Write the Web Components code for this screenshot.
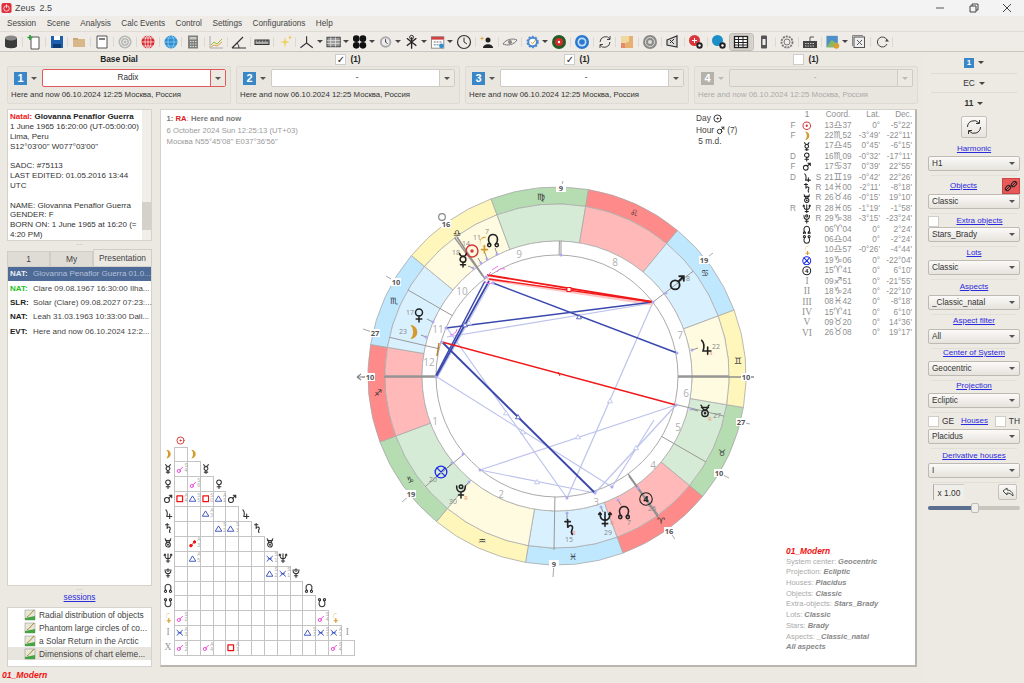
<!DOCTYPE html>
<html>
<head>
<meta charset="utf-8">
<title>Zeus 2.5</title>
<style>
  html, body { margin: 0; height: 683px; overflow: hidden; }
  body {
    display: flex; flex-direction: column;
    background: #ece9e3; color: #333;
    font: 8.400px/1.2 "Liberation Sans", "DejaVu Sans", sans-serif;
  }
  #work { display: flex; flex: 1; min-height: 0; }
  #mid { display: flex; flex-direction: column; width: 924px; }
  #content { display: flex; gap: 8px; padding: 5px 7px 0 7px; flex: 1; min-height: 0; }
</style>
</head>
<body>
<z-titlebar></z-titlebar>
<z-menubar></z-menubar>
<z-toolbar></z-toolbar>
<div id="work">
  <div id="mid">
    <z-dials></z-dials>
    <div id="content">
      <z-left></z-left>
      <z-chart></z-chart>
    </div>
    <z-status>01_Modern</z-status>
  </div>
  <z-side></z-side>
</div>

<script>
// planet glyphs, 24x24 box, stroke comes from the svg around them
const G = {
  sun: '<circle cx="12" cy="12" r="9.5"/><circle cx="12" cy="12" r="1.6" fill="currentColor"/>',
  moon: '<path fill="currentColor" stroke="none" d="M8 1.500A10.500 10.500 0 0 1 8 22.500A15 15 0 0 0 8 1.500Z"/>',
  merc: '<circle cx="12" cy="11" r="4.6"/><path d="M6.5 1.5 A5.6 5.6 0 0 0 17.500 1.500M12 15.600V23M8 19.500H16"/>',
  venus: '<circle cx="12" cy="8" r="5.600"/><path d="M12 13.600V23M7.500 18.500H16.500"/>',
  mars: '<circle cx="9.500" cy="14.500" r="6"/><path d="M14 10L21 3M15 3H21V9"/>',
  jup: '<path d="M7 2C11 6 11 12 9 18H21M16 12V23"/>',
  sat: '<path d="M6 4H14M10 1V13C12 8 19 9 17 15C16 18 14 20 17 23"/>',
  ura: '<circle cx="12" cy="16" r="5.500"/><circle cx="12" cy="16" r="1" fill="currentColor"/><path d="M5 2C8 3 6 10.500 12 10.500C18 10.500 16 3 19 2M6 6H18"/>',
  nep: '<path d="M4.500 3C4.500 11 7 14 12 14C17 14 19.500 11 19.500 3M12 2V23M8 19H16M2.500 5L4.500 2.500L6.500 5M17.500 5L19.500 2.500L21.500 5"/>',
  plu: '<path d="M5 4C5 12 8 13.500 12 13.500C16 13.500 19 12 19 4M12 13.500V23M8 18.500H16"/><circle cx="12" cy="5" r="2.800"/>',
  node: '<path d="M8 19C2 12 5 3 12 3C19 3 22 12 16 19"/><circle cx="6" cy="20" r="2.600"/><circle cx="18" cy="20" r="2.600"/>',
  snode: '<path d="M8 5C2 12 5 21 12 21C19 21 22 12 16 5"/><circle cx="6" cy="4" r="2.600"/><circle cx="18" cy="4" r="2.600"/>',
  lil: '<path fill="currentColor" stroke="none" d="M17 1A7 7 0 1 0 17 14L14 14A6 6 0 0 1 14 2Z"/><path d="M14 13V23M10 18.500H18"/>',
  fort: '<circle cx="12" cy="12" r="10"/><path d="M5 5L19 19M19 5L5 19"/>',
  chir: '<circle cx="12" cy="12" r="10"/><text x="12" y="17.500" text-anchor="middle" font-size="15" stroke="none" fill="currentColor" font-family="Open Sans, sans-serif" font-weight="700">4</text>',
  conj: '<circle cx="9" cy="16" r="5"/><path d="M13 12L21 4"/>',
  opp: '<circle cx="6" cy="18" r="4" fill="currentColor"/><circle cx="18" cy="6" r="4" fill="currentColor"/><path d="M8 16L16 8"/>',
  tri: '<path d="M12 4L22 20H2Z"/>',
  sq: '<path d="M3 3H21V21H3Z"/>',
  sex: '<path d="M3 4L21 20M21 4L3 20M7 12H17"/>'
};
const GCOL = { sun: '#d63b3b', moon: '#d49a2c', lil: '#d49a2c', fort: '#1a2ae8', merc: '#222', venus: '#222', mars: '#222', jup: '#222', sat: '#222', ura: '#222', nep: '#222', plu: '#222', node: '#222', snode: '#222', chir: '#222' };
const glyph = (name, size, col, sw) =>
  `<svg width="${size}" height="${size}" viewBox="0 0 24 24" fill="none" stroke-linecap="round" stroke-linejoin="round" stroke="${col || GCOL[name] || '#222'}" color="${col || GCOL[name] || '#222'}" stroke-width="${sw || 2.600}" style="display:block;margin:auto">${G[name]}</svg>`;

class ZTitlebar extends HTMLElement {
  constructor() { super(); this.attachShadow({ mode: 'open' }); }
  connectedCallback() {
    this.shadowRoot.innerHTML = `
      <style>
        :host { display: flex; align-items: center; height: 16px; background: #f3f3f3; padding-left: 1px; color: #444; font-size: 9px; }
        .name { margin-left: 3px; word-spacing: 2px; }
        .win { margin-left: auto; display: flex; }
        .win svg { width: 33px; height: 10px; }
      </style>
      <svg width="11" height="12" viewBox="0 0 12 12">
        <rect x="0.500" y="0.500" width="11" height="11" rx="2" fill="#e0303c"/>
        <circle cx="6" cy="6.500" r="3" fill="none" stroke="#fff" stroke-width="0.800"/>
        <path d="M6 2V6" stroke="#fff" stroke-width="0.800"/>
      </svg>
      <span class="name">Zeus 2.5</span>
      <span class="win">
        <svg viewBox="0 0 33 10"><path d="M12 5H20" stroke="#555"/></svg>
        <svg viewBox="0 0 33 10"><path d="M13 3H19V9H13ZM15 3V1H21V7H19" fill="none" stroke="#444"/></svg>
        <svg viewBox="0 0 33 10" style="margin-right:1px"><path d="M13 1L21 9M21 1L13 9" stroke="#444"/></svg>
      </span>`;
  }
}
customElements.define('z-titlebar', ZTitlebar);

class ZMenubar extends HTMLElement {
  constructor() { super(); this.attachShadow({ mode: 'open' }); }
  connectedCallback() {
    const items = ['Session', 'Scene', 'Analysis', 'Calc Events', 'Control', 'Settings', 'Configurations', 'Help'];
    this.shadowRoot.innerHTML = `
      <style>
        :host { display: flex; align-items: center; gap: 10.500px; height: 15px; padding: 1px 0 0 7px; box-sizing: border-box; background: #efece7; color: #444; font-size: 8.200px; }
      </style>
      ${items.map(i => `<span>${i}</span>`).join('')}`;
  }
}
customElements.define('z-menubar', ZMenubar);

const ICONS = {
  cyl: '<path d="M2 4V12C2 15 14 15 14 12V4Z" fill="#3a3a3a"/><ellipse cx="8" cy="4" rx="6" ry="2.500" fill="#888"/>',
  newdoc: '<path d="M5 3H13V15H5Z" fill="#fff" stroke="#555"/><path d="M4 1V6M1.500 3.500H6.500" stroke="#2a9a3a" stroke-width="1.600"/>',
  save: '<path d="M2 2H14V14H2Z" fill="#1c5fae"/><rect x="5" y="2" width="6" height="4" fill="#fff"/><rect x="4" y="10" width="8" height="4" fill="#0d3a70"/>',
  folder: '<path d="M2 5H14V13H2Z" fill="#d8b888"/><path d="M2 4H7V6H2Z" fill="#c8a878"/>',
  doc: '<path d="M3 2H13V14H3Z" fill="#fff" stroke="#555"/><path d="M5 5H11" stroke="#555" stroke-width="1.500"/>',
  tgray: '<circle cx="8" cy="8" r="6.500" fill="#b8b8b4"/><circle cx="8" cy="8" r="4.500" fill="none" stroke="#eee"/><circle cx="8" cy="8" r="2" fill="none" stroke="#eee"/>',
  glober: '<circle cx="8" cy="8" r="6.500" fill="#d8262c"/><path d="M1.500 8H14.500M8 1.500V14.500M3 4H13M3 12H13" stroke="#fff" stroke-width="0.700"/><ellipse cx="8" cy="8" rx="3" ry="6.500" fill="none" stroke="#fff" stroke-width="0.700"/>',
  globeb: '<circle cx="8" cy="8" r="6.500" fill="#2d8fd0"/><path d="M1.500 8H14.500M3 4H13M3 12H13" stroke="#9cd0f0" stroke-width="0.700"/><ellipse cx="8" cy="8" rx="3" ry="6.500" fill="none" stroke="#9cd0f0" stroke-width="0.700"/>',
  calc: '<rect x="3" y="1.500" width="10" height="13" fill="#7f7f7b"/><rect x="4.500" y="3" width="7" height="2.500" fill="#c8c8c4"/><path d="M5 7.500H6.500M7.500 7.500H9M10 7.500H11.500M5 10H6.500M7.500 10H9M10 10H11.500M5 12.500H6.500M7.500 12.500H9M10 12.500H11.500" stroke="#ddd"/>',
  chart: '<path d="M2 2V14H15" fill="none" stroke="#aaa"/><path d="M3 11L6 8L9 10L14 5" fill="none" stroke="#9bbf30"/><path d="M3 13L6 11L9 12L14 8" fill="none" stroke="#e0a040"/>',
  angle: '<path d="M1 14H15M1 14L12 3" fill="none" stroke="#333" stroke-width="1.200"/><path d="M8 14A7 7 0 0 0 6 9" fill="none" stroke="#333"/>',
  ruler: '<rect x="1" y="6" width="14" height="4.500" fill="#aaa" stroke="#333"/><path d="M4 6V8M7 6V8M10 6V8M13 6V8" stroke="#333"/>',
  spark: '<path d="M8 3L9 7L13 8L9 9L8 14L7 9L3 8L7 7Z" fill="#f0d060"/><path d="M13 1L13.500 3L15 3.500L13.500 4L13 6L12.500 4L11 3.500L12.500 3Z" fill="#f0c040"/>',
  axes: '<path d="M8 2V9L1.500 14M8 9L14.500 14" fill="none" stroke="#333" stroke-width="1.200"/>',
  film: '<rect x="1" y="3" width="14" height="10" fill="#999" stroke="#444"/><path d="M1 6.500H15M1 9.500H15M5 3V13M10 3V13" stroke="#eee" stroke-width="0.700"/>',
  clover: '<circle cx="4.500" cy="4.500" r="3.500" fill="#111"/><circle cx="11.500" cy="4.500" r="3.500" fill="#111"/><circle cx="4.500" cy="11.500" r="3.500" fill="#111"/><circle cx="11.500" cy="11.500" r="3.500" fill="#111"/>',
  cgear: '<circle cx="8" cy="8" r="6" fill="#aaa"/><circle cx="8" cy="8" r="4" fill="#eee"/><path d="M8 5V8L10 10" fill="none" stroke="#333"/>',
  star: '<path d="M8 3V15M3 4L13 12M13 4L3 12" stroke="#222" stroke-width="1.400"/><circle cx="8" cy="3" r="2" fill="none" stroke="#222"/>',
  cal: '<rect x="1.500" y="2.500" width="13" height="12" fill="#fff" stroke="#888"/><rect x="1.500" y="2.500" width="13" height="3" fill="#d04040"/><path d="M4 8H6M7 8H9M10 8H12M4 11H6M7 11H9" stroke="#666"/><circle cx="12" cy="12" r="2.500" fill="#2d8fd0"/>',
  clock: '<circle cx="8" cy="8" r="6.500" fill="none" stroke="#333" stroke-width="1.200"/><path d="M8 3.500V8L11 10" fill="none" stroke="#333"/>',
  people: '<circle cx="9" cy="6" r="2.500" fill="#222"/><path d="M4 14C4 9 14 9 14 14Z" fill="#222"/><path d="M3 2L3.600 4L5.500 4.500L3.600 5L3 7L2.400 5L0.500 4.500L2.400 4Z" fill="#e0a030"/>',
  eye: '<path d="M1 10C4 5 11 4 15 6C12 11 5 12 1 10Z" fill="none" stroke="#777"/><circle cx="8" cy="8" r="2" fill="#888"/>',
  gearb: '<circle cx="8" cy="8" r="5.500" fill="#4a8ad0" stroke="#4a8ad0" stroke-width="2" stroke-dasharray="2 1.500"/><circle cx="8" cy="8" r="3.500" fill="#fff"/><path d="M6 8L8 10L11 6" fill="none" stroke="#d4a020"/>',
  redg: '<circle cx="8" cy="8" r="7" fill="#245c28"/><circle cx="8" cy="8" r="4" fill="#d42a2a"/><circle cx="8" cy="8" r="1.200" fill="#fff"/>',
  blt: '<circle cx="8" cy="8" r="7" fill="#2a78d0"/><circle cx="8" cy="8" r="4.500" fill="#bfe0fa"/><circle cx="8" cy="8" r="2.800" fill="#2a78d0"/>',
  rot: '<path d="M3 8A5.500 5.500 0 0 1 13 5M13 8A5.500 5.500 0 0 1 3 11" fill="none" stroke="#444"/><path d="M13 2V5.500H10M3 14V10.500H6" fill="none" stroke="#444"/>',
  map: '<rect x="2" y="2" width="12" height="12" fill="#f0d8a0"/><path d="M2 14L8 8H10V2H14V14Z" fill="#e8b070"/><path d="M2 9H6V14H2Z" fill="#e88870"/>',
  tg2: '<circle cx="8" cy="8" r="7" fill="#8a8a86"/><circle cx="8" cy="8" r="4.500" fill="none" stroke="#ddd"/><circle cx="8" cy="8" r="2" fill="#ddd"/>',
  tag: '<path d="M2 6L12 2V13L2 11Z" fill="#ddd" stroke="#333" stroke-width="1.200"/><path d="M5 6L9 10M9 5L5 9" stroke="#333"/>',
  redgear: '<circle cx="6.500" cy="6.500" r="5.500" fill="#d8383c"/><path d="M4 6.500H9M6.500 4V9" stroke="#fff"/><circle cx="11.500" cy="11.500" r="3.200" fill="#222"/><circle cx="11.500" cy="11.500" r="1.200" fill="#fff"/>',
  bluegear: '<circle cx="6.500" cy="6.500" r="5.500" fill="#1c8fc8"/><circle cx="11.500" cy="11.500" r="3.200" fill="#222"/><circle cx="11.500" cy="11.500" r="1.200" fill="#fff"/>',
  table: '<rect x="1.500" y="2.500" width="13" height="11" fill="#fff" stroke="#222" stroke-width="1.300"/><path d="M1.500 5.500H14.500M1.500 8.500H14.500M1.500 11H14.500M5.500 2.500V13.500M10 2.500V13.500" stroke="#222"/>',
  phone: '<rect x="5" y="1.500" width="6" height="13" rx="1" fill="#555"/><rect x="6.500" y="5" width="3" height="6" fill="#eee"/>',
  gearo: '<circle cx="8" cy="8" r="5.500" fill="none" stroke="#777" stroke-width="1.800" stroke-dasharray="2 1"/><circle cx="8" cy="8" r="3" fill="none" stroke="#777"/>',
  kbd: '<rect x="1" y="7" width="14" height="7" fill="#444"/><path d="M3 9.500H13M3 12H13" stroke="#ccc" stroke-dasharray="1.500 1"/><path d="M8 7V3L12 3" fill="none" stroke="#555"/>',
  mapg: '<rect x="1.500" y="1.500" width="12" height="12" fill="#4f90c8"/><path d="M1.500 13.500L7 6L13.500 10V13.500Z" fill="#8ab860"/><circle cx="12" cy="12" r="3" fill="#d8a030"/>',
  boxx: '<rect x="3" y="3" width="10.500" height="10.500" fill="#eee" stroke="#555"/><path d="M1.500 12V1.500H12" fill="none" stroke="#888"/><path d="M6 6L11 11M11 6L6 11" stroke="#555"/>',
  redo: '<path d="M13 6A5 5 0 1 0 13 10" fill="none" stroke="#444"/><path d="M11 7.500H15L13 5Z" fill="#444"/>'
};

class ZToolbar extends HTMLElement {
  constructor() { super(); this.attachShadow({ mode: 'open' }); }
  connectedCallback() {
    const tools = ['cyl', 'newdoc', 'save', 'folder', 'doc', 'tgray', 'glober', 'globeb', 'calc', 'chart', 'angle', 'ruler', 'spark',
      'axes+', 'film+', 'clover+', 'cgear+', 'star+', 'cal+', 'clock', 'people', 'eye', 'gearb+', 'redg', 'blt', 'rot', 'map', 'tg2',
      'tag', 'redgear', 'bluegear', 'table*', 'phone', 'gearo', 'kbd', 'mapg+', 'boxx', 'redo'];
    const html = tools.map(t => {
      const name = t.replace(/[+*]/, '');
      const arrow = t.endsWith('+');
      return `<span class="t ${arrow ? 'arr' : ''} ${t.endsWith('*') ? 'on' : ''}">
        <svg width="16" height="16" viewBox="0 0 16 16">${ICONS[name]}</svg>${arrow ? '<i></i>' : ''}</span>`;
    }).join('');
    this.shadowRoot.innerHTML = `
      <style>
        :host { display: flex; align-items: center; height: 19px; background: #efece7; border-top: 1px solid #dedbd5; border-bottom: 1px solid #c9c6c0; }
        .t { position: relative; display: flex; align-items: center; justify-content: flex-start; width: 22.800px; height: 16px; padding-left: 3px; box-sizing: border-box; }
        .t::after { content: ""; position: absolute; right: 0; top: 3px; height: 10px; border-right: 1px solid #dcd9d3; }
        .arr { width: 26.200px; }
        .arr::after { display: none; }
        .on { background: #d4d1cb; outline: 1px solid #c0bdb7; border-radius: 2px; }
        i { margin-left: 2px; border: 3px solid transparent; border-top: 3px solid #444; border-bottom: 0; }
      </style>${html}`;
  }
}
customElements.define('z-toolbar', ZToolbar);

class ZCombo extends HTMLElement {
  constructor() { super(); this.attachShadow({ mode: 'open' }); }
  connectedCallback() {
    this.shadowRoot.innerHTML = `
      <style>
        :host { display: flex; align-items: center; box-sizing: border-box; height: 15px; padding-left: 3px; color: #333;
          border: 1px solid #bdbab4; border-radius: 2px; background: linear-gradient(#fbfaf8, #e6e3dd); font-size: 8.200px; }
        :host([wide]) { background: #fff; height: 18px; border-color: #cfccc6; }
        :host([red]) { border-color: #e0595c; }
        :host([off]) { background: #e8e5df; color: #aaa; border-color: #cfccc6; }
        .v { flex: 1; white-space: nowrap; overflow: hidden; }
        :host([wide]) .v { text-align: center; }
        .b { width: 14px; align-self: stretch; display: flex; align-items: center; justify-content: center; }
        :host([wide]) .b { border-left: 1px solid #cfccc6; background: #ece9e3; }
        :host([red]) .b { border-left-color: #e0595c; }
        i { border: 3px solid transparent; border-top: 3px solid #555; border-bottom: 0; }
        :host([off]) i { border-top-color: #bbb; }
      </style>
      <span class="v"><slot></slot></span><span class="b"><i></i></span>`;
  }
}
customElements.define('z-combo', ZCombo);

class ZDial extends HTMLElement {
  constructor() { super(); this.attachShadow({ mode: 'open' }); }
  connectedCallback() {
    const off = this.hasAttribute('off');
    this.shadowRoot.innerHTML = `
      <style>
        :host { display: block; box-sizing: border-box; height: 38px; padding: 2px 4px 0 3px; background: #e9e6df; border: 1px solid #dedbd4; border-radius: 2px; color: ${off ? '#aaa' : '#333'}; font-size: 7.800px; }
        .top { display: flex; align-items: center; height: 18px; }
        .n { width: 13px; height: 13px; margin-left: 3px; background: ${off ? '#b5b2ac' : '#3a87c8'}; color: #fff; font-weight: 700; font-size: 11px; line-height: 13px; text-align: center; }
        i { margin: 0 5px 0 4px; border: 3px solid transparent; border-top: 3px solid ${off ? '#bbb' : '#555'}; border-bottom: 0; }
        z-combo { flex: 1; }
        .d { margin-top: 3px; white-space: nowrap; }
      </style>
      <div class="top">
        <span class="n">${this.getAttribute('n')}</span><i></i>
        <z-combo wide ${this.hasAttribute('red') ? 'red' : ''} ${off ? 'off' : ''}>${this.getAttribute('value')}</z-combo>
      </div>
      <div class="d"><slot></slot></div>`;
  }
}
customElements.define('z-dial', ZDial);

class ZDials extends HTMLElement {
  constructor() { super(); this.attachShadow({ mode: 'open' }); }
  connectedCallback() {
    const when = 'Here and now 06.10.2024 12:25 Москва, Россия';
    const head = (on) => `<span class="h"><b class="c">${on ? '✓' : ''}</b><b>(1)</b></span>`;
    this.shadowRoot.innerHTML = `
      <style>
        :host { display: block; padding: 0 6px 0 7px; }
        .g { display: grid; grid-template-columns: repeat(4, 224px); grid-template-rows: 14px 38px; column-gap: 5px; }
        .h { display: flex; align-items: center; justify-content: center; gap: 4px; height: 14px; font-size: 8.400px; color: #222; }
        .c { display: inline-block; width: 9px; height: 9px; background: #fff; border: 1px solid #ccc; font-size: 10px; line-height: 9px; text-align: center; font-family: "DejaVu Sans", sans-serif; }
      </style>
      <div class="g">
        <span class="h"><b>Base Dial</b></span>${head(true)}${head(true)}${head(false)}
        <z-dial n="1" value="Radix" red>${when}</z-dial>
        <z-dial n="2" value="-">${when}</z-dial>
        <z-dial n="3" value="-">${when}</z-dial>
        <z-dial n="4" value="-" off>${when}</z-dial>
      </div>`;
  }
}
customElements.define('z-dials', ZDials);

class ZLeft extends HTMLElement {
  constructor() { super(); this.attachShadow({ mode: 'open' }); }
  connectedCallback() {
    const rows = [
      ['NAT:', '#e8ecf4', 'Glovanna Penaflor Guerra 01.0...', true],
      ['NAT:', '#22c022', 'Clare 09.08.1967 16:30:00 Ilha...'],
      ['SLR:', '#222', 'Solar (Clare) 09.08.2027 07:23:...'],
      ['NAT:', '#222', 'Leah 31.03.1963 10:33:00 Dall...'],
      ['EVT:', '#222', 'Here and now 06.10.2024 12:2...']
    ];
    const sessions = ['Radial distribution of objects', 'Phantom large circles of co...', 'a Solar Return in the Arctic', 'Dimensions of chart eleme...'];
    const chk = `<svg width="12" height="12" viewBox="0 0 12 12"><rect x="1" y="1" width="10" height="10" fill="#e8e8d8" stroke="#888" stroke-width="0.500"/><path d="M1 11H11V7L1 9Z" fill="#45a545"/><path d="M3 8L5.500 6L10 1" fill="none" stroke="#a88828"/></svg>`;
    this.shadowRoot.innerHTML = `
      <style>
        :host { display: flex; flex-direction: column; width: 145px; flex: none; font-size: 8px; }
        .box { background: #fff; border: 1px solid #d5d2cc; box-sizing: border-box; }
        .info { position: relative; height: 132px; padding: 2px 11px 0 2px; line-height: 9.850px; overflow: hidden; white-space: nowrap; color: #333; }
        .bar { position: absolute; right: 0; top: 0; bottom: 0; width: 9px; background: #f0eee9; }
        .bar b { position: absolute; left: 0; right: 0; top: 92px; height: 28px; background: #d4d1cb; }
        .split { height: 8px; text-align: center; line-height: 5px; color: #999; font-size: 6px; }
        .tabs { display: flex; height: 17px; align-items: flex-end; color: #444; font-size: 8.400px; }
        .tabs span { display: flex; align-items: center; justify-content: center; height: 15px; width: 43px; box-sizing: border-box; background: #dfdcd6; border: 1px solid #d0cdc7; border-bottom: 0; }
        .tabs .a { height: 17px; flex: 1; background: #ece9e3; }
        .list { height: 320px; }
        .r { display: flex; height: 14.300px; align-items: center; padding-left: 2px; color: #444; white-space: nowrap; }
        .r b { width: 23px; flex: none; }
        .r.s { background: #4e6a96; color: #b3c0d8; }
        .link { text-align: center; height: 12px; line-height: 12px; color: #2a2ae0; text-decoration: underline; margin: -2px 0 3px; font-size: 8.200px; }
        .ses { height: 60px; padding-top: 1px; font-size: 8.400px; color: #444; }
        .ses div { display: flex; align-items: center; height: 12.800px; padding-left: 16px; gap: 3px; white-space: nowrap; }
        .ses .h { background: #e8e5df; }
      </style>
      <div class="box info">
        <div><b style="color:#f02020">Natal:</b> <b style="color:#222">Glovanna Penaflor Guerra</b></div>
        <div>1 June 1965 16:20:00 (UT-05:00:00)</div>
        <div>Lima, Peru</div>
        <div>S12°03'00" W077°03'00"</div>
        <div>&nbsp;</div>
        <div>SADC: #75113</div>
        <div>LAST EDITED: 01.05.2016 13:44</div>
        <div>UTC</div>
        <div>&nbsp;</div>
        <div>NAME: Glovanna Penaflor Guerra</div>
        <div>GENDER: F</div>
        <div>BORN ON: 1 June 1965 at 16:20 (=</div>
        <div>4:20 PM)</div>
        <span class="bar"><b></b></span>
      </div>
      <div class="split">....</div>
      <div class="tabs"><span>1</span><span>My</span><span class="a">Presentation</span></div>
      <div class="box list">
        ${rows.map(r => `<div class="r ${r[3] ? 's' : ''}"><b style="color:${r[1]}">${r[0]}</b><span>${r[2]}</span></div>`).join('')}
      </div>
      <div class="split">....</div>
      <div class="link">sessions</div>
      <div class="box ses">
        ${sessions.map((s, i) => `<div class="${i === 3 ? 'h' : ''}">${chk}<span>${s}</span></div>`).join('')}
      </div>`;
  }
}
customElements.define('z-left', ZLeft);

// the dial: free canvas in page coordinates
class ZWheel extends HTMLElement {
  constructor() { super(); this.attachShadow({ mode: 'open' }); }
  connectedCallback() {
    const cx = 557, cy = 376;
    const pt = (r, a) => [(cx + r * Math.cos(a * Math.PI / 180)).toFixed(1), (cy + r * Math.sin(a * Math.PI / 180)).toFixed(1)];
    const sector = (r1, r2, a1, a2, fill) => {
      const p1 = pt(r2, a1), p2 = pt(r2, a2), p3 = pt(r1, a2), p4 = pt(r1, a1);
      return `<path d="M${p1}A${r2} ${r2} 0 0 1 ${p2}L${p3}A${r1} ${r1} 0 0 0 ${p4}Z" fill="${fill}" stroke="#aaa" stroke-width="0.800"/>`;
    };
    const outer = ['#b6dcb2', '#ff8a8a', '#bfe8ff', '#fff6bb'];
    const inner = ['#d6ebd6', '#ffb9b9', '#d9f1ff', '#fffbe0'];
    let rings = '';
    for (let k = 0; k < 12; k++) {
      const a = 9.600 + 30 * k;
      rings += sector(172, 189, a, a + 30, outer[k % 4]);
      rings += sector(135, 172, a, a + 30, inner[k % 4]);
    }
    // house cusps [angle, from, to, thick]
    const cusps = [[180, 121, 172, 1.500], [140, 121, 172, 1], [91, 121, 174, 1], [54, 121, 172, 1.500], [30, 121, 172, 1], [13.500, 121, 172, 1],
      [0, 121, 172, 1.500], [-37.600, 121, 172, 1], [-89, 121, 135, 1], [-126.500, 121, 172, 1.500], [-150, 121, 172, 1], [-167, 121, 172, 1]];
    const cuspLines = cusps.map(c => {
      const a = pt(c[1], c[0]), b = pt(c[2], c[0]);
      return `<line x1="${a[0]}" y1="${a[1]}" x2="${b[0]}" y2="${b[1]}" stroke="#999" stroke-width="${c[3]}"/>`;
    }).join('');
    const light = [[490, 283, 437, 378], [447, 337, 653, 303], [447, 328, 567, 498], [437, 377, 612, 487], [480, 470, 676, 405],
      [480, 470, 595, 493], [567, 498, 653, 302], [595, 493, 676, 405], [612, 487, 654, 420]];
    const dark = [[489, 281, 436, 377, 1.800], [485, 281, 436, 375, 1.500], [493, 283, 677, 353, 1.500], [446, 328, 653, 302, 1.500], [442, 342, 595, 493, 1.800]];
    const line = (l, col, w) => `<line x1="${l[0]}" y1="${l[1]}" x2="${l[2]}" y2="${l[3]}" stroke="${col}" stroke-width="${w}"/>`;
    const tri = (x, y, col) => `<path d="M${x} ${y - 2.500}L${x + 2.500} ${y + 1.800}H${x - 2.500}Z" fill="#fff" stroke="${col}" stroke-width="0.800"/>`;
    const dots = [[653, 302], [677, 353], [676, 405], [612, 487], [595, 493], [567, 498], [480, 470], [446, 328], [442, 342], [436, 377], [463, 454], [561, 255], [486, 277], [493, 283],
      [473, 268], [481, 263], [487, 259], [497, 254], [433, 322], [426, 337], [666, 293], [692, 350], [691, 409], [452, 463], [469, 482], [567, 513], [601, 507], [618, 500], [638, 488]];
    const ticks = [[473, 268, 468, 266], [481, 263, 478, 258], [487, 259, 485, 253], [497, 254, 495, 248], [433, 322, 427, 319], [426, 337, 421, 335],
      [692, 350, 698, 348], [691, 409, 698, 411], [469, 482, 465, 486], [567, 513, 567, 520], [601, 507, 603, 512], [618, 500, 621, 505], [452, 463, 447, 468]];
    // name, x, y, size
    const planets = [['sun', 472, 251, 15, 2.400], ['merc', 463, 260, 15], ['lil', 483, 245, 17], ['node', 493, 240, 15], ['venus', 419, 315, 15], ['moon', 413, 332, 16],
      ['mars', 677, 283, 18], ['jup', 705, 347, 16], ['ura', 705, 411, 14], ['fort', 441, 472, 14, 2.200], ['plu', 461, 491, 15], ['sat', 569, 527, 16], ['nep', 605, 519, 16], ['node', 624, 512, 15], ['chir', 646, 499, 15, 1.800]];
    const pl = planets.map(p => `<svg x="${p[1] - p[3] / 2}" y="${p[2] - p[3] / 2}" width="${p[3]}" height="${p[3]}" viewBox="0 0 24 24" overflow="visible" fill="none" stroke-linecap="round" stroke="${GCOL[p[0]]}" color="${GCOL[p[0]]}" stroke-width="${p[4] || 2.400}">${G[p[0]]}</svg>`).join('');
    const signs = [['♍', 541, 197], ['♌', 634, 213], ['♋', 705, 273], ['♊', 738, 361], ['♉', 722, 453], ['♈', 661, 521], ['♓', 573, 557], ['♒', 482, 541], ['♑', 410, 480], ['♐', 378, 393], ['♏', 394, 301], ['♎', 457, 233]];
    const sig = signs.map(s => `<text x="${s[1]}" y="${s[2] + 3}" text-anchor="middle" font-size="9" fill="#333" font-family="DejaVu Sans">${s[0]}\uFE0E</text>`).join('');
    const nums = [['9', 519, 254], ['10', 462, 291], ['11', 438, 329], ['12', 429, 362], ['1', 435, 421], ['2', 501, 494], ['3', 596, 502], ['4', 653, 465], ['5', 678, 427], ['6', 686, 393], ['7', 680, 335], ['8', 615, 262]];
    const num = nums.map(n => `<text x="${n[1]}" y="${n[2] + 4}" text-anchor="middle" font-size="10" fill="#b0b0b0" font-family="DejaVu Serif">${n[0]}</text>`).join('');
    const labels = [['10', 396, 282, 386, 276], ['27', 375, 333, 363, 329], ['10', 370, 377, 362, 377], ['19', 411, 494, 402, 502], ['9', 554, 564, 553, 577],
      ['16', 669, 531, 675, 539], ['10', 719, 473, 729, 478], ['27', 741, 422, 750, 424], ['10', 746, 377, 754, 377], ['19', 704, 260, 713, 253], ['9', 561, 188, 563, 181], ['16', 446, 224, 443, 220]];
    const lab = labels.map(l => `<line x1="${l[1]}" y1="${l[2]}" x2="${l[3]}" y2="${l[4]}" stroke="#aaa"/><rect x="${l[1] - 5}" y="${l[2] - 4}" width="10" height="8" fill="#fff"/><text x="${l[1]}" y="${l[2] + 3}" text-anchor="middle" font-size="7.500" font-weight="700" fill="#555">${l[0]}</text>`).join('');
    const small = [['14', 466, 243], ['18', 456, 252], ['11', 477, 237], ['7', 487, 231], ['17', 410, 312], ['23', 403, 331], ['18', 686, 278], ['22', 716, 346], ['20', 433, 479], ['30', 453, 501], ['15', 569, 539], ['29', 608, 532], ['7', 629, 522], ['26', 652, 508], ['27', 717, 415]];
    const sm = small.map(s => `<text x="${s[1]}" y="${s[2] + 2.500}" text-anchor="middle" font-size="7" fill="#888">${s[0]}</text>`).join('');
    const retro = [['s', 711, 353], ['R', 466, 498], ['R', 574, 533], ['R', 612, 523], ['R', 710, 419]];
    const re = retro.map(s => `<text x="${s[1]}" y="${s[2] + 2}" text-anchor="middle" font-size="5.500" fill="#f08870">${s[0]}</text>`).join('');
    this.shadowRoot.innerHTML = `
      <style>
        :host { display: block; position: absolute; inset: 0; }
        svg.w { display: block; width: 100%; height: 100%; }
        text { font-family: "Open Sans", sans-serif; }
      </style>
      <svg class="w" viewBox="161 110 754 555">
        ${rings}
        <circle cx="${cx}" cy="${cy}" r="135" fill="#fff" stroke="#aaa" stroke-width="0.800"/>
        <circle cx="${cx}" cy="${cy}" r="121" fill="#fff" stroke="#aaa"/>
        ${cuspLines}
        <line x1="561" y1="255" x2="561" y2="241" stroke="#999"/>
        <line x1="457" y1="237" x2="483" y2="276" stroke="#8f8f8f" stroke-width="1.500"/>
        <line x1="629" y1="476" x2="658" y2="517" stroke="#8f8f8f" stroke-width="1.500"/>
        <line x1="384" y1="377" x2="436" y2="377" stroke="#8f8f8f" stroke-width="1.500"/>
        <line x1="678" y1="377" x2="754" y2="377" stroke="#8f8f8f" stroke-width="1.500"/>
        <g opacity="0.900">${light.map(l => line(l, '#b6bdea', 1.200)).join('')}</g>
        ${line([487, 279, 653, 304], '#ffc4c4', 3)}
        ${dark.map(l => line(l, '#3a48ae', l[4])).join('')}
        ${line([487, 275, 653, 302], '#f01818', 1.800)}
        ${line([489, 279, 653, 302], '#f01818', 1.400)}
        ${line([442, 342, 676, 405], '#f01818', 1.500)}
        <rect x="567" y="287.500" width="4" height="4" fill="#fff" stroke="#f01818"/>
        <line x1="558" y1="372" x2="560" y2="376" stroke="#f01818"/>
        ${tri(518, 417, '#3a48ae')}${tri(579, 317, '#3a48ae')}${tri(465, 325, '#3a48ae')}
        ${tri(506, 413, '#b6bdea')}${tri(523, 432, '#b6bdea')}${tri(578, 437, '#b6bdea')}${tri(610, 401, '#b6bdea')}${tri(636, 448, '#b6bdea')}${tri(469, 323, '#b6bdea')}${tri(537, 482, '#b6bdea')}
        <path d="M484 281A6 6 0 0 0 493 282M497 272A7 7 0 0 1 505 269M450 335A7 7 0 0 0 457 329" fill="none" stroke="#f070e8"/>
        <path d="M492 270L498 266M486 277L491 272" stroke="#f070e8"/>
        <path d="M439 343L437 356" stroke="#b8802c" stroke-width="1.500"/>
        ${ticks.map(t => line(t, '#777', 0.800)).join('')}
        ${dots.map(d => `<circle cx="${d[0]}" cy="${d[1]}" r="1.500" fill="#b0a8f0"/>`).join('')}
        ${sig}${num}${lab}${sm}${re}${pl}
        <path d="M357 377L361 374M357 377L361 380M357 377H365" stroke="#888" stroke-width="1.200" fill="none"/>
        <circle cx="442" cy="217" r="3.300" fill="none" stroke="#888" stroke-width="1.200"/>
      </svg>`;
  }
}
customElements.define('z-wheel', ZWheel);

class ZEphemeris extends HTMLElement {
  constructor() { super(); this.attachShadow({ mode: 'open' }); }
  connectedCallback() {
    const rows = [
      ['F', 'sun', '', '13♎37', '0°', "-5°22'"], ['F', 'moon', '', '22♏52', "-3°49'", "-22°11'"], ['', 'merc', '', '17♎45', "0°45'", "-6°15'"],
      ['D', 'venus', '', '16♏09', "-0°32'", "-17°11'"], ['F', 'mars', '', '17♋37', "0°39'", "22°55'"], ['D', 'jup', 'S', '21♊19', "-0°42'", "22°26'"],
      ['', 'sat', 'R', '14♓00', "-2°11'", "-8°18'"], ['', 'ura', 'R', '26♉46', "-0°15'", "19°10'"], ['R', 'nep', 'R', '28♓05', "-1°19'", "-1°58'"],
      ['', 'plu', 'R', '29♑38', "-3°15'", "-23°24'"], ['', 'node', '', '06♈04', '0°', "2°24'"], ['', 'snode', '', '06♎04', '0°', "-2°24'"],
      ['', 'lil', '', '10♎57', "-0°26'", "-4°44'"], ['', 'fort', '', '19♑06', '0°', "-22°04'"], ['', 'chir', '', '15♈41', '0°', "6°10'"],
      ['', 'I', '', '09♐51', '0°', "-21°55'"], ['', 'II', '', '18♑24', '0°', "-22°10'"], ['', 'III', '', '08♓42', '0°', "-8°18'"],
      ['', 'IV', '', '15♈41', '0°', "6°10'"], ['', 'V', '', '09♉20', '0°', "14°36'"], ['', 'VI', '', '26♉08', '0°', "19°17'"]
    ];
    const cell = r => `<span class="c">${r[0]}</span>
      <span class="c">${G[r[1]] ? glyph(r[1], 9.500) : `<em>${r[1]}</em>`}</span>
      <span class="c">${r[2]}</span><span class="c">${r[3].replace(/([♈-♓])/, '<u>$1\uFE0E</u>')}</span><span class="e">${r[4]}</span><span class="e">${r[5]}</span>`;
    this.shadowRoot.innerHTML = `
      <style>
        :host { display: grid; grid-template-columns: 14px 14px 9px 30px 27px 32px; grid-auto-rows: 10.400px; align-items: center; color: #909090; font-size: 8.200px; white-space: nowrap; }
        .c { text-align: center; }
        .e { text-align: right; }
        u { text-decoration: none; font-family: "DejaVu Sans", sans-serif; font-size: 10px; line-height: 8px; }
        em { font-style: normal; font-family: "Liberation Serif", serif; font-size: 9.500px; }
      </style>
      <span></span><span class="c" style="color:#888">1</span><span></span><span class="c">Coord.</span><span class="e">Lat.</span><span class="e">Dec.</span>
      ${rows.map(cell).join('')}`;
  }
}
customElements.define('z-ephemeris', ZEphemeris);

class ZAspects extends HTMLElement {
  constructor() { super(); this.attachShadow({ mode: 'open' }); }
  connectedCallback() {
    const names = ['moon', 'merc', 'venus', 'mars', 'jup', 'sat', 'ura', 'nep', 'plu', 'node', 'snode', 'lil', 'I', 'X'];
    const P = '#f040e0', B = '#3a50c0', R = '#f01010';
    const kinds = { c: ['conj', P], t: ['tri', B], s: ['sq', R], x: ['sex', B], o: ['opp', R] };
    const asp = {
      '1,0': 'c S4', '2,1': 'c S6', '3,0': 's A4', '3,1': 't S5', '3,2': 's S0', '3,3': 't A1', '4,2': 't A3', '5,3': 't S2', '5,4': 't S3',
      '6,1': 'o A3', '7,1': 't A5', '7,7': 'x S1', '8,7': 't S2', '8,8': 'x S1', '11,0': 'c S2', '11,11': 'c S4',
      '12,0': 'x A3', '12,10': 't S3', '12,11': 'x S3', '12,12': 'x A1', '13,0': 'c S2', '13,2': 'c A4', '13,4': 's A1', '13,12': 'c S4'
    };
    const lab = n => G[n] ? glyph(n, 10, n === 'moon' || n === 'lil' ? '#d49a2c' : '#333') : `<em>${n}</em>`;
    let html = `<span class="l" style="grid-column:2;grid-row:1">${glyph('sun', 9, '#d63b3b')}</span>`;
    names.forEach((n, r) => {
      html += `<span class="l" style="grid-column:1;grid-row:${r + 2}">${lab(n)}</span>`;
      for (let c = 0; c <= r; c++) {
        const a = asp[r + ',' + c];
        let inner = '';
        if (a) {
          const k = kinds[a[0]];
          inner = `<span class="g">${glyph(k[0], 7.500, k[1], k[0] === 'sq' ? 4 : 3)}</span><span class="m">${a[2]}<br>${a[3]}</span>`;
        }
        html += `<span class="x" style="grid-column:${c + 2};grid-row:${r + 2}">${inner}</span>`;
      }
      if (r < 13) html += `<span class="l" style="grid-column:${r + 3};grid-row:${r + 2}">${lab(n)}</span>`;
      else html += `<span class="x" style="grid-column:15;grid-row:15"></span>`;
    });
    this.shadowRoot.innerHTML = `
      <style>
        :host { display: grid; grid-template-columns: 12px repeat(14, 12.850px); grid-template-rows: 13px repeat(14, 14.900px); margin: 0 0 10px 1px; width: max-content; }
        .x { display: flex; align-items: center; box-sizing: border-box; border: 1px solid #c4c4c4; margin: 0 -1px -1px 0; padding-left: 1px; }
        .l { display: flex; align-items: center; justify-content: center; color: #999; }
        .g { width: 7.500px; flex: none; }
        .m { font-size: 5px; line-height: 5.500px; color: #aaa; margin-left: 1px; transform: translateY(-1px); }
        em { font-style: normal; font-family: "Liberation Serif", serif; font-size: 9.500px; color: #999; }
      </style>${html}`;
  }
}
customElements.define('z-aspects', ZAspects);

class ZChart extends HTMLElement {
  constructor() { super(); this.attachShadow({ mode: 'open' }); }
  connectedCallback() {
    const legend = [['System center', 'Geocentric'], ['Projection', 'Ecliptic'], ['Houses', 'Placidus'], ['Objects', 'Classic'], ['Extra-objects', 'Stars_Brady'], ['Lots', 'Classic'], ['Stars', 'Brady'], ['Aspects', '_Classic_natal']];
    this.shadowRoot.innerHTML = `
      <style>
        :host { display: block; position: relative; flex: 1; background: #fff; border: 1px solid #d5d2cc; border-right: 2px solid #b9b6b0; border-bottom: 2px solid #b9b6b0; box-sizing: border-box; height: 558px; }
        .layer { position: relative; height: 100%; display: grid; grid-template-columns: 1fr 90px 129px; pointer-events: none; }
        .a { display: flex; flex-direction: column; justify-content: space-between; }
        .h { padding: 3px 0 0 5.500px; font-size: 7.700px; line-height: 11.500px; color: #9a9a9a; }
        .h b { font-weight: 700; color: #777; }
        .day { padding-top: 3px; font-size: 8.400px; line-height: 11.500px; color: #444; }
        .day div { display: flex; align-items: center; gap: 2px; }
        .z { display: flex; flex-direction: column; justify-content: space-between; }
        .leg { padding: 0 0 12px 0; font-size: 7.500px; line-height: 10.700px; color: #aaa; white-space: nowrap; }
        .leg b { font-style: italic; color: #888; }
        .leg .t { color: #f01010; font-weight: 700; font-style: italic; font-size: 8.400px; }
      </style>
      <z-wheel></z-wheel>
      <div class="layer">
        <div class="a">
          <div class="h">
            <div><b>1:</b> <b style="color:#e02020">RA</b>: <b>Here and now</b></div>
            <div>6 October 2024 Sun 12:25:13 (UT+03)</div>
            <div>Москва N55°45'08" E037°36'56"</div>
          </div>
          <z-aspects></z-aspects>
        </div>
        <div class="day">
          <div>Day <span style="width:9px">${glyph('sun', 9, '#333')}</span></div>
          <div>Hour <span style="width:9px">${glyph('mars', 9, '#333')}</span> (7)</div>
          <div>&nbsp;5 m.d.</div>
        </div>
        <div class="z">
          <z-ephemeris></z-ephemeris>
          <div class="leg">
            <div class="t">01_Modern</div>
            ${legend.map(l => `<div>${l[0]}: <b>${l[1]}</b></div>`).join('')}
            <div><b>All aspects</b></div>
          </div>
        </div>
      </div>`;
  }
}
customElements.define('z-chart', ZChart);

class ZStatus extends HTMLElement {
  constructor() { super(); this.attachShadow({ mode: 'open' }); }
  connectedCallback() {
    this.shadowRoot.innerHTML = `
      <style>
        :host { display: flex; align-items: center; height: 16px; padding-left: 2px; color: #f01010; font-weight: 700; font-style: italic; font-size: 8.600px; }
      </style><slot></slot>`;
  }
}
customElements.define('z-status', ZStatus);

class ZSide extends HTMLElement {
  constructor() { super(); this.attachShadow({ mode: 'open' }); }
  connectedCallback() {
    const sec = (label, value, gapTop, extra) => `
      <a style="margin-top:${gapTop}px">${label}</a>
      <z-combo style="margin-top:${extra || 1}px">${value}</z-combo><hr>`;
    this.shadowRoot.innerHTML = `
      <style>
        :host { display: flex; flex-direction: column; width: 100px; padding: 0 4px; box-sizing: border-box; background: #ede9e3; font-size: 8.400px; color: #333; }
        .spin { display: flex; align-items: center; justify-content: center; gap: 4px; height: 22px; flex: none; box-sizing: border-box; border-bottom: 1px solid #dedbd5; margin: 0 3px; }
        .spin i { border: 3px solid transparent; border-top: 3px solid #444; border-bottom: 0; }
        .n { width: 10px; height: 10px; background: #3a87c8; color: #fff; font-weight: 700; text-align: center; line-height: 10px; font-size: 8px; }
        .rb { align-self: center; flex: none; width: 26px; height: 22px; box-sizing: border-box; margin-top: 3px; display: flex; align-items: center; justify-content: center; background: linear-gradient(#fbfaf8, #e6e3dd); border: 1px solid #c4c1bb; border-radius: 2px; }
        a { display: block; height: 12px; flex: none; line-height: 12px; text-align: center; color: #2a2ae0; text-decoration: underline; font-size: 8px; white-space: nowrap; }
        hr { border: 0; border-top: 1px solid #e2dfd9; margin: 4px 3px 0; height: 0; flex: none; }
        z-combo { flex: none; }
        .row { display: flex; align-items: center; flex: none; }
        .ck { width: 9px; height: 9px; background: #fff; border: 1px solid #d0cdc7; flex: none; }
        .red { width: 18px; height: 16px; background: #e85a5a; display: flex; align-items: center; justify-content: center; margin-left: 3px; border: 1px solid #c44; box-sizing: border-box; }
        .scale { display: flex; align-items: center; height: 16px; flex: none; margin-top: 1px; }
        .scale span { margin-left: 5px; width: 31px; height: 16px; box-sizing: border-box; line-height: 16px; text-align: center; background: #f0eee9; border-left: 1px solid #aaa; border-top: 1px solid #ccc; }
        .back { margin-left: auto; margin-right: 3px; width: 19px; height: 16px; display: flex; align-items: center; justify-content: center; background: linear-gradient(#fbfaf8, #e6e3dd); border: 1px solid #c4c1bb; border-radius: 2px; box-sizing: border-box; }
        .sl { position: relative; height: 4px; flex: none; margin-top: 6px; background: #c9c6c0; border-radius: 2px; }
        .sl::before { content: ""; position: absolute; left: 0; top: 0; bottom: 0; width: 45px; background: #5a6e90; border-radius: 2px; }
        .sl::after { content: ""; position: absolute; left: 43px; top: -3px; width: 8px; height: 10px; background: #f0eee9; border: 1px solid #bbb; box-sizing: border-box; border-radius: 2px; }
      </style>
      <div class="spin"><span class="n">1</span><i></i></div>
      <div class="spin" style="height:19px">EC <i></i></div>
      <div class="spin" style="height:20px;border:0"><b>11</b> <i></i></div>
      <div class="rb">
        <svg width="18" height="16" viewBox="0 0 18 16"><path d="M2.500 8A6.500 6.500 0 0 1 14 4M15.500 8A6.500 6.500 0 0 1 4 12" fill="none" stroke="#333"/><path d="M14.500 1V4.500H11M3.500 15V11.500H7" fill="none" stroke="#333"/></svg>
      </div>
      ${sec('Harmonic', 'H1', 5)}
      <div class="row" style="height:17px;margin-top:1px">
        <a style="flex:1">Objects</a>
        <span class="red"><svg width="14" height="12" viewBox="0 0 14 12"><path d="M2 10L6 6M8 6L12 2" stroke="#222"/><rect x="1" y="6" width="6" height="4" rx="2" fill="none" stroke="#222" transform="rotate(-45 4 8)"/><rect x="7" y="2" width="6" height="4" rx="2" fill="none" stroke="#222" transform="rotate(-45 10 4)"/></svg></span>
      </div>
      <z-combo>Classic</z-combo><hr>
      <div class="row" style="height:12px;margin-top:1px"><span class="ck"></span><a style="flex:1">Extra objects</a></div>
      <z-combo>Stars_Brady</z-combo><hr>
      ${sec('Lots', 'Classic', 0)}
      ${sec('Aspects', '_Classic_natal', 1, 2)}
      ${sec('Aspect filter', 'All', 0, 2)}
      ${sec('Center of System', 'Geocentric', -2, 2)}
      ${sec('Projection', 'Ecliptic', -1)}
      <div class="row" style="height:12px;margin-top:2px;gap:3px"><span class="ck"></span><span>GE</span><a style="flex:1">Houses</a><span class="ck"></span><span>TH</span></div>
      <z-combo style="margin-top:2px">Placidus</z-combo><hr>
      ${sec('Derivative houses', 'I', 1)}
      <div class="scale"><span>x 1.00</span><div class="back"><svg width="12" height="10" viewBox="0 0 12 10"><path d="M1 4L5 1V3C8 3 11 5 11 9C9 7 8 6 5 6V8Z" fill="none" stroke="#444"/></svg></div></div>
      <div class="sl"></div>`;
  }
}
customElements.define('z-side', ZSide);
</script>
</body>
</html>
